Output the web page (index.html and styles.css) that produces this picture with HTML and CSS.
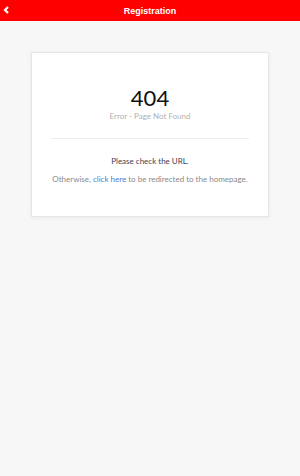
FILE: index.html
```html
<!DOCTYPE html>
<html>

<head>
    <title>Registration</title>
    <link rel="stylesheet" href="styles.css">
</head>

<body>

    <div class="header">
        <a href="#" class="back">
            <svg width="7" height="8" viewBox="0 0 7 8">
                <path d="M5 1 L2 4 L5 7" fill="none" stroke="#fff" stroke-width="2.2"/>
            </svg>
        </a>
        <h1>Registration</h1>
    </div>

    <div class="page">
        <div class="card">
            <div class="code">404</div>
            <div class="subtitle">Error - Page Not Found</div>
            <hr>
            <p class="check">Please check the URL.</p>
            <p class="other">Otherwise, <a href="#">click here</a> to be redirected to the homepage.</p>
        </div>
    </div>

</body>
</html>
```

FILE: styles.css
```css
body {
    margin: 0;
    font-family: Lato, sans-serif;
    background-color: #f7f7f7;
    min-height: 476px;
}

.header {
    height: 21px;
    background-color: #ff0000;
    display: flex;
    align-items: center;
    justify-content: center;
    position: relative;
}

.header h1 {
    margin: 0;
    font-family: "Liberation Sans", Arial, sans-serif;
    font-size: 9px;
    font-weight: bold;
    color: #fff;
}

.back {
    position: absolute;
    left: 3px;
    top: 6px;
    display: flex;
}

.page {
    padding: 31px 31px 0 31px;
}

.card {
    background-color: #fff;
    border: 1px solid #e6e6e6;
    box-shadow: 0 1px 4px rgba(0, 0, 0, 0.06);
    height: 163px;
    padding: 0 19px;
    text-align: center;
}

.code {
    margin-top: 32px;
    font-size: 22px;
    line-height: 26px;
    color: #111;
}

.subtitle {
    font-size: 8px;
    line-height: 10px;
    color: #b0b0b0;
}

hr {
    border: none;
    border-top: 1px solid #ececec;
    margin: 17px 0 0 0;
}

.check {
    margin: 17px 0 0 0;
    font-size: 8px;
    line-height: 10px;
    color: #3d4250;
}

.other {
    margin: 8px 0 0 0;
    font-size: 8px;
    line-height: 10px;
    color: #8a8a8a;
}

.other a {
    color: #4f7ad8;
    text-decoration: none;
}
```
